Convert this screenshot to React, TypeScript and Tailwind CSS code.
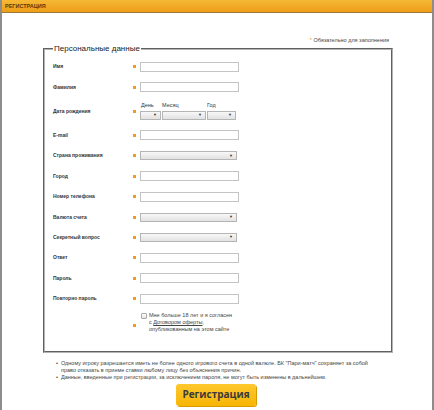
const fields: { label: string; kind: "text" | "select" | "date" }[] = [
  { label: "Имя", kind: "text" },
  { label: "Фамилия", kind: "text" },
  { label: "Дата рождения", kind: "date" },
  { label: "E-mail", kind: "text" },
  { label: "Страна проживания", kind: "select" },
  { label: "Город", kind: "text" },
  { label: "Номер телефона", kind: "text" },
  { label: "Валюта счета", kind: "select" },
  { label: "Секретный вопрос", kind: "select" },
  { label: "Ответ", kind: "text" },
  { label: "Пароль", kind: "text" },
  { label: "Повторно пароль", kind: "text" },
];

function Dot() {
  return <span className="block w-[3px] h-[3px] bg-[#f39a1e]" />;
}

function Select({ className }: { className: string }) {
  return (
    <div
      className={`${className} h-[9px] border border-[#b5b5b5] bg-gradient-to-b from-[#f8f8f8] to-[#e2e2e2] flex items-center justify-end pr-[3px]`}
    >
      <span className="text-[4px] leading-none text-[#333]">▼</span>
    </div>
  );
}

function TextInput() {
  return <div className="w-[99px] h-[10px] border border-[#c4c4c4] bg-white" />;
}

export default function App() {
  return (
    <div className="w-[434px] h-[410px] overflow-hidden bg-white border-x-2 border-[#8d8d8d] font-['Liberation_Sans',sans-serif] text-[#333]">
      <div className="h-[13px] bg-gradient-to-b from-[#f6b935] to-[#ee9d15] border-b border-[#9a7a3a] flex items-center pl-[3px]">
        <span className="text-[5.5px] font-bold text-[#5a3b0a]">РЕГИСТРАЦИЯ</span>
      </div>

      <div className="mt-[25px] pr-[43px] text-right text-[5.5px] leading-none text-[#444]">
        <span className="text-[#f39a1e]">*</span> Обязательно для заполнения
      </div>

      <fieldset className="ml-[41px] mt-[1px] w-[350px] h-[308px] border-2 border-[#b4b4b4] [border-style:groove] pl-[8px] pt-[4px]">
        <legend className="px-[1px] text-[8px] leading-none text-[#222]">Персональные данные</legend>
        <div className="flex flex-col">
          {fields.map((f) => (
            <div
              key={f.label}
              className={`flex items-center ${f.kind === "date" ? "h-[28px]" : "h-[20.4px]"}`}
            >
              <div className="w-[80px] text-[5px] font-bold leading-none text-[#333]">{f.label}</div>
              <div className="w-[7px]">
                <Dot />
              </div>
              {f.kind === "text" && <TextInput />}
              {f.kind === "select" && <Select className="w-[97px]" />}
              {f.kind === "date" && (
                <div className="flex flex-col">
                  <div className="flex text-[5.5px] leading-none text-[#333] mb-[2px]">
                    <span className="w-[22px] pl-[1px]">День</span>
                    <span className="w-[45px]">Месяц</span>
                    <span>Год</span>
                  </div>
                  <div className="flex gap-[1px]">
                    <Select className="w-[21px]" />
                    <Select className="w-[44px]" />
                    <Select className="w-[29px]" />
                  </div>
                </div>
              )}
            </div>
          ))}
          <div className="flex mt-[3px]">
            <div className="w-[80px]" />
            <div className="w-[7px] pt-[12px]">
              <Dot />
            </div>
            <div className="flex gap-[2px] pl-[1px]">
              <span className="mt-[1px] w-[6px] h-[6px] border border-[#aaa] bg-gradient-to-b from-white to-[#e4e4e4] rounded-[1px]" />
              <p className="text-[5.5px] leading-[7px] text-[#444]">
                Мне больше 18 лет и я согласен
                <br />с <span className="underline">Договором оферты</span>,
                <br />
                опубликованным на этом сайте
              </p>
            </div>
          </div>
        </div>
      </fieldset>

      <ul className="mt-[7px] ml-[54px] w-[328px] text-[5.5px] leading-[7px] text-[#444]">
        <li className="flex gap-[3px]">
          <span>•</span>
          <span>
            Одному игроку разрешается иметь не более одного игрового счета в одной валюте. БК "Пари-матч" сохраняет за собой
            право отказать в приеме ставки любому лицу без объяснения причин.
          </span>
        </li>
        <li className="flex gap-[3px]">
          <span>•</span>
          <span>Данные, введенные при регистрации, за исключением пароля, не могут быть изменены в дальнейшем.</span>
        </li>
      </ul>

      <div className="flex justify-center mt-[3px] pr-[2px]">
        <button className="w-[80px] h-[22px] rounded-[3px] bg-gradient-to-b from-[#ffc82c] to-[#f7b500] shadow-[1px_1px_0_#d99a00] text-[10px] font-bold text-[#3a3a3a] font-['Open_Sans',sans-serif]">
          Регистрация
        </button>
      </div>
    </div>
  );
}
